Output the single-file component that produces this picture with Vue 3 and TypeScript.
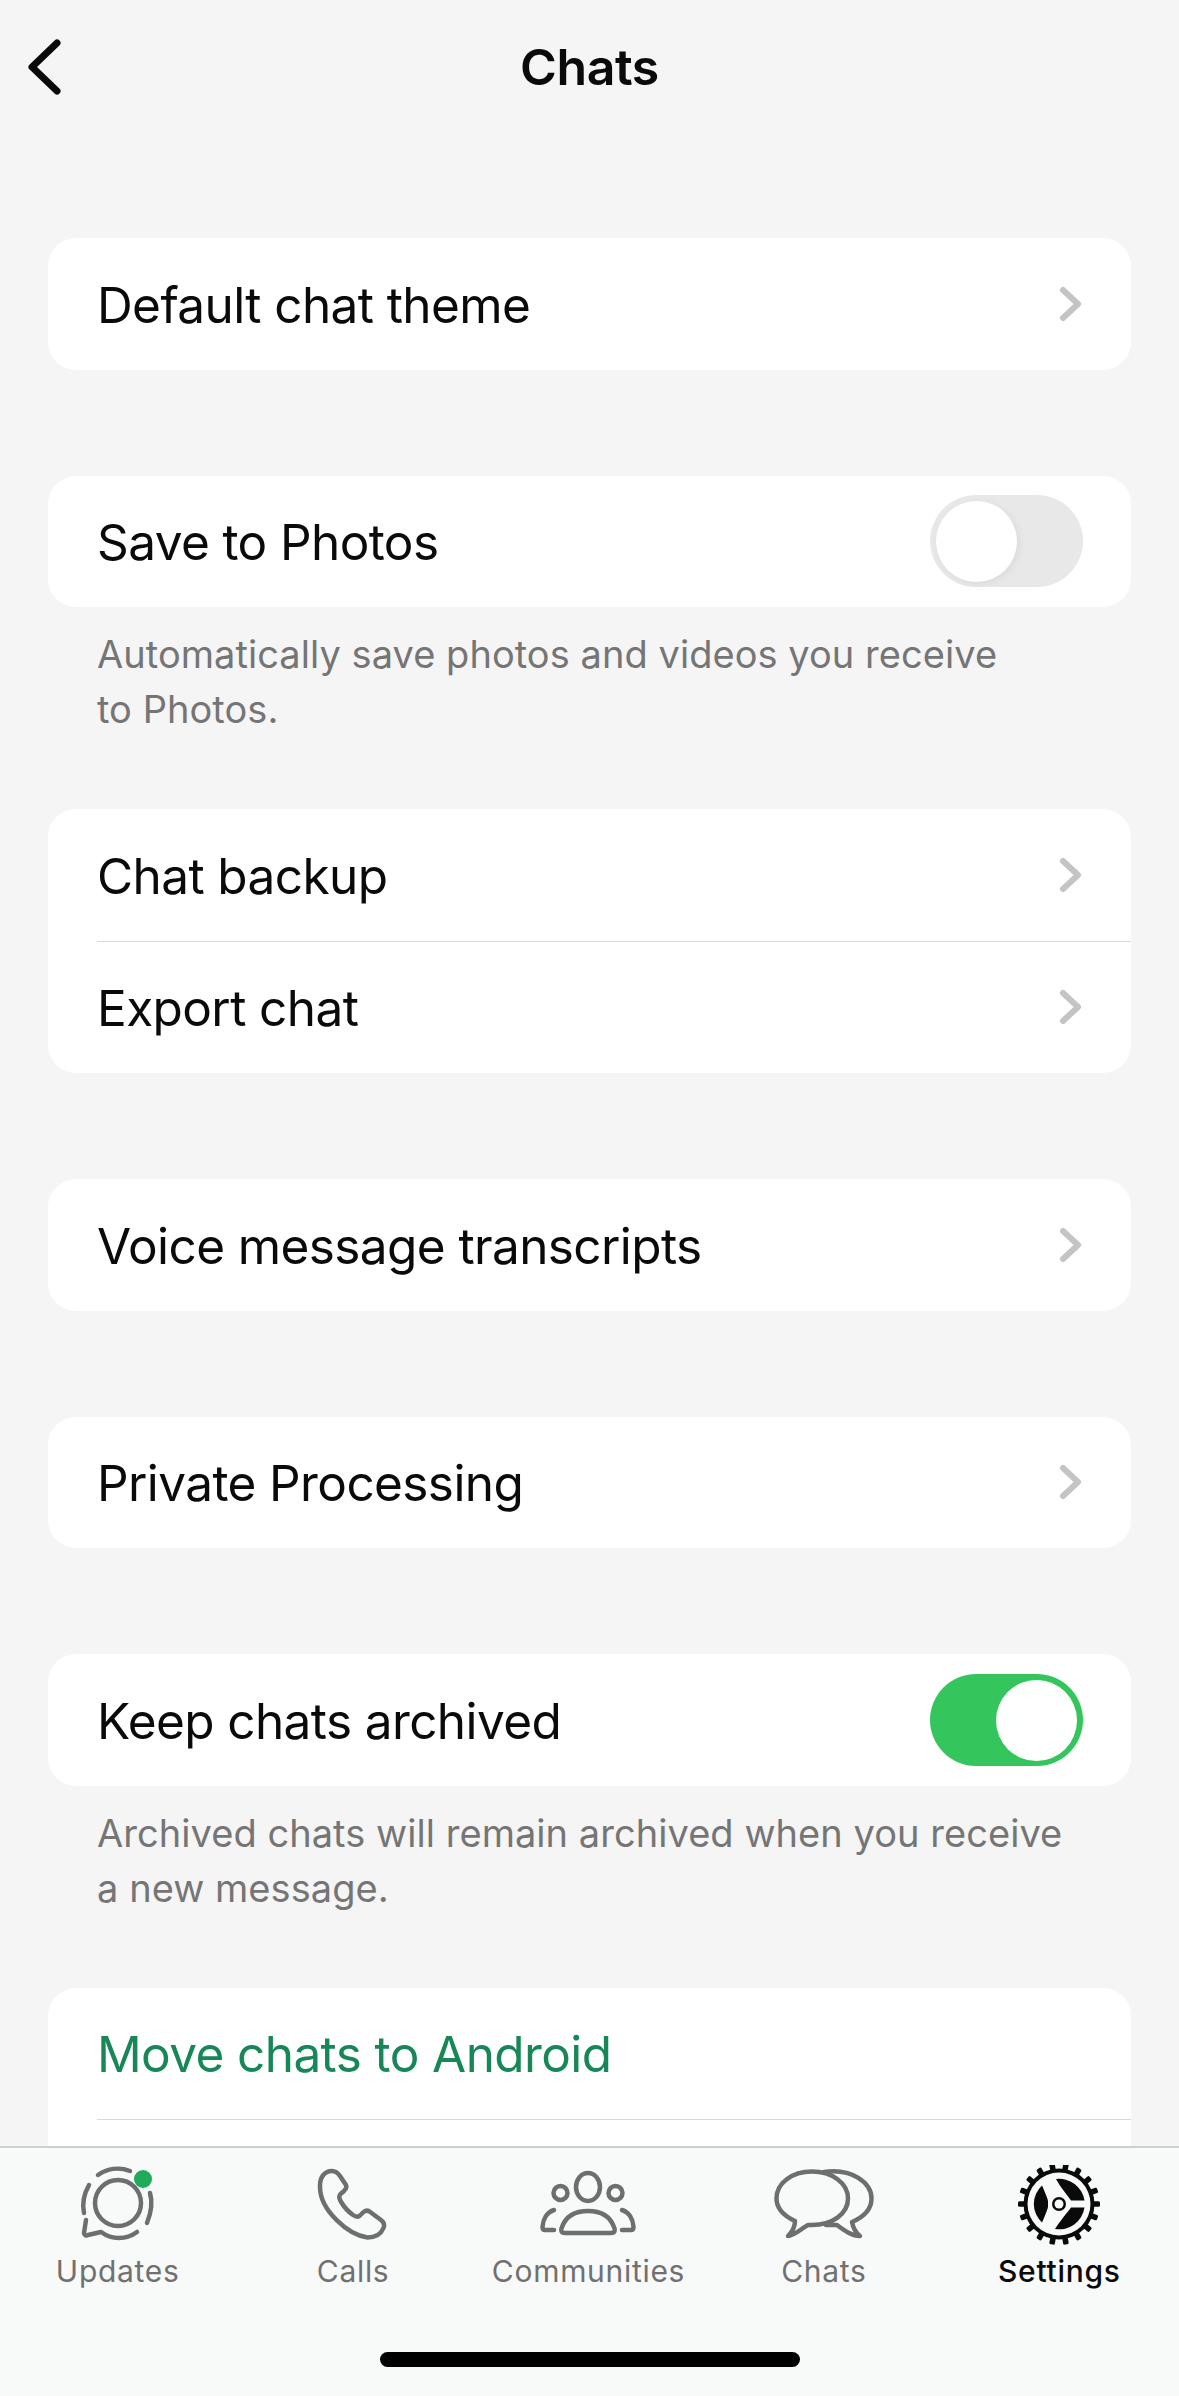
<template>
  <div class="screen">
    <header class="topbar">
      <button class="back" aria-label="Back">
        <svg width="44" height="66" viewBox="0 0 44 66">
          <path d="M33 9 L8 33 L33 57" class="back-line" />
        </svg>
      </button>
      <h1 class="title">Chats</h1>
      <span></span>
    </header>

    <main class="list">
      <section v-for="group in groups" :key="group.rows[0].label" class="group">
        <div class="card">
          <div v-for="row in group.rows" :key="row.label" class="row">
            <span class="label" :class="{ green: row.green }">{{ row.label }}</span>
            <svg v-if="row.kind === 'link'" class="chevron" width="26" height="40" viewBox="0 0 26 40">
              <path d="M6 6 L21 20 L6 34" />
            </svg>
            <span v-else-if="row.kind === 'switch'" class="switch" :class="{ on: row.on }">
              <span class="knob"></span>
            </span>
          </div>
        </div>
        <p v-if="group.note" class="note">
          <span v-for="line in group.note" :key="line">{{ line }}</span>
        </p>
      </section>
    </main>

    <nav class="tabbar">
      <div class="tabs">
        <div class="tab">
          <svg class="icon" width="100" height="80" viewBox="0 0 100 80">
            <circle cx="50" cy="38" r="23" />
            <path d="M30 10 A35 35 0 0 1 62 6" />
            <path d="M21 20 C16 29 14 39 16 48" />
            <path d="M82 28 C85 38 83 48 79 58" />
            <path d="M18 55 L16 68 C16 70 18 71 20 70 L33 67 C44 75 58 75 69 67" />
            <circle class="dot" cx="75" cy="14" r="9" />
          </svg>
          <span>Updates</span>
        </div>
        <div class="tab">
          <svg class="icon" width="100" height="80" viewBox="0 0 100 80">
            <path d="M29 6 C33 6 35 8 37 11 L43 20 C44 22 43 24 41 26 L37.5 29 C35.5 31 36 33 37.5 36 C41 42 45 46.5 50 50 C53 52 55 52.5 57 50.5 L60 47.5 C62 45.5 64 45 66.5 46.5 L78 55 C81 57.5 82 60 80.5 63 C78 69 72 72.5 64.5 72.5 C45 70 17 45 17 22 C16.5 13 21 6 29 6 Z" />
          </svg>
          <span>Calls</span>
        </div>
        <div class="tab">
          <svg class="icon" width="110" height="80" viewBox="0 0 110 80">
            <ellipse cx="55" cy="22" rx="12" ry="14" />
            <circle cx="27.5" cy="28" r="7" />
            <circle cx="82.5" cy="28" r="7" />
            <path d="M32 68 C28 68 27.5 65 29 62 C33 51 43 46 55 46 C67 46 77 51 81 62 C82.5 65 82 68 78 68 Z" />
            <path d="M21 45 C14 47 10 54 9.5 62 C9.5 64 10.5 65 12 65 H21" />
            <path d="M89 45 C96 47 100 54 100.5 62 C100.5 64 99.5 65 98 65 H89" />
          </svg>
          <span>Communities</span>
        </div>
        <div class="tab">
          <svg class="icon" width="100" height="80" viewBox="0 0 100 80">
            <path d="M38 6.5 C58 6.5 74 18 74 33.5 C74 49 58 60 38 60 L34 60 C28 63 20 71 14 71 C17 68 21 62 21 56 C8 50 2.5 42 2.5 33.5 C2.5 18 18 6.5 38 6.5 Z" />
            <path d="M50 7 C78 3 97.5 18 97.5 33.5 C97.5 43 92 51 78 57 C79 62 82 68 86 71 C78 71 71 66 63 60 L52 60" />
          </svg>
          <span>Chats</span>
        </div>
        <div class="tab active">
          <svg class="gear" width="100" height="80" viewBox="-50 -39 100 80">
            <rect v-for="a in teeth" :key="a" x="-2.8" y="-41" width="5.6" height="10" rx="1.5" :transform="`rotate(${a})`" />
            <circle r="35.5" />
            <circle class="gear-white" r="31.5" />
            <path d="M-3 -25 A25.5 25.5 0 0 1 25.5 -3.5 L12 -3.5 C8 -9 2 -16 -3 -25 Z" />
            <path d="M25.5 3.5 A25.5 25.5 0 0 1 -4 25 C1 17 8 9 12 3.5 Z" />
            <path d="M-17 -18.5 A25 25 0 0 0 -17 18.5 C-15 14 -12 7 -11 3 L-11 -3 C-12 -7 -15 -14 -17 -18.5 Z" />
            <circle r="7" />
            <circle class="gear-white" r="4.5" />
          </svg>
          <span>Settings</span>
        </div>
      </div>
      <div class="home"></div>
    </nav>
  </div>
</template>

<script setup lang="ts">
interface Row {
  label: string
  kind: 'link' | 'switch' | 'plain'
  on?: boolean
  green?: boolean
}

interface Group {
  rows: Row[]
  note?: string[]
}

const groups: Group[] = [
  { rows: [{ label: 'Default chat theme', kind: 'link' }] },
  {
    rows: [{ label: 'Save to Photos', kind: 'switch', on: false }],
    note: ['Automatically save photos and videos you receive', 'to Photos.']
  },
  {
    rows: [
      { label: 'Chat backup', kind: 'link' },
      { label: 'Export chat', kind: 'link' }
    ]
  },
  { rows: [{ label: 'Voice message transcripts', kind: 'link' }] },
  { rows: [{ label: 'Private Processing', kind: 'link' }] },
  {
    rows: [{ label: 'Keep chats archived', kind: 'switch', on: true }],
    note: ['Archived chats will remain archived when you receive', 'a new message.']
  },
  {
    // second row sits behind the tab bar, only its divider shows
    rows: [
      { label: 'Move chats to Android', kind: 'plain', green: true },
      { label: '', kind: 'plain' }
    ]
  }
]

const teeth = Array.from({ length: 18 }, (_, i) => 10 + i * 20)
</script>

<style>
html,
body {
  margin: 0;
  background: #f5f5f5;
}
</style>

<style scoped>
.screen {
  height: 2396px;
  display: flex;
  flex-direction: column;
  overflow: hidden;
  background: #f5f5f5;
  font-family: Inter, "Liberation Sans", sans-serif;
  color: #0a0a0a;
}

.topbar {
  flex: none;
  height: 134px;
  display: grid;
  grid-template-columns: 1fr auto 1fr;
  align-items: center;
  padding-left: 24px;
  box-sizing: border-box;
}

.back {
  width: 44px;
  height: 66px;
  padding: 0;
  border: none;
  background: none;
}

.back-line {
  fill: none;
  stroke: #0a0a0a;
  stroke-width: 7;
  stroke-linecap: round;
  stroke-linejoin: round;
}

.title {
  margin: 0 24px 0 0;
  font-size: 50px;
  font-weight: 600;
  letter-spacing: -0.4px;
}

.list {
  flex: 1;
  min-height: 0;
  padding: 104px 48px 0;
  overflow: hidden;
}

.group {
  padding-bottom: 72px;
}

.card {
  background: #fff;
  border-radius: 28px;
  overflow: hidden;
}

.card:last-child {
  margin-bottom: 34px;
}

.row {
  height: 131.5px;
  box-sizing: border-box;
  margin-left: 49px;
  padding-right: 48px;
  display: flex;
  align-items: center;
  justify-content: space-between;
}

.row + .row {
  height: 132.5px;
  border-top: 1px solid #d8d8d8;
}

.label {
  padding-top: 2px;
  font-size: 49.5px;
  letter-spacing: -0.6px;
}

.green {
  color: #178757;
}

.chevron path {
  fill: none;
  stroke: #c4c4c4;
  stroke-width: 6;
  stroke-linecap: round;
  stroke-linejoin: round;
}

.switch {
  width: 153px;
  height: 92px;
  box-sizing: border-box;
  padding: 6px;
  border-radius: 46px;
  background: #e8e8e8;
  display: flex;
}

.switch.on {
  background: #34c65c;
  justify-content: flex-end;
}

.knob {
  width: 81px;
  height: 81px;
  border-radius: 50%;
  background: #fff;
}

.switch:not(.on) .knob {
  box-shadow: 2px 2px 8px rgba(0, 0, 0, 0.06);
}

.note {
  margin: 0;
  padding: 20px 0 0 49px;
  font-size: 38px;
  line-height: 55px;
  letter-spacing: 0.05px;
  color: #757575;
}

.note span {
  display: block;
  white-space: nowrap;
}

.tabbar {
  flex: none;
  height: 250px;
  box-sizing: border-box;
  border-top: 2px solid #cfcfcf;
  background: #f8f9f9;
  display: flex;
  flex-direction: column;
  align-items: center;
}

.tabs {
  width: 100%;
  box-sizing: border-box;
  padding: 17px 2px 0 0;
  display: grid;
  grid-template-columns: repeat(5, 1fr);
}

.tab {
  display: flex;
  flex-direction: column;
  align-items: center;
  font-size: 30px;
  line-height: 40px;
  letter-spacing: 0.7px;
  color: #707070;
}

.tab span {
  margin-top: 6px;
}

.tab.active {
  color: #0a0a0a;
  font-weight: 500;
}

.icon circle,
.icon ellipse,
.icon path {
  fill: none;
  stroke: #6e6e6e;
  stroke-width: 4.5;
  stroke-linecap: round;
  stroke-linejoin: round;
}

.icon .dot {
  fill: #1faa5c;
  stroke: none;
}

.gear {
  fill: #0a0a0a;
}

.gear-white {
  fill: #f8f9f9;
}

.home {
  width: 420px;
  height: 15px;
  margin-top: 61px;
  border-radius: 8px;
  background: #000;
}
</style>
